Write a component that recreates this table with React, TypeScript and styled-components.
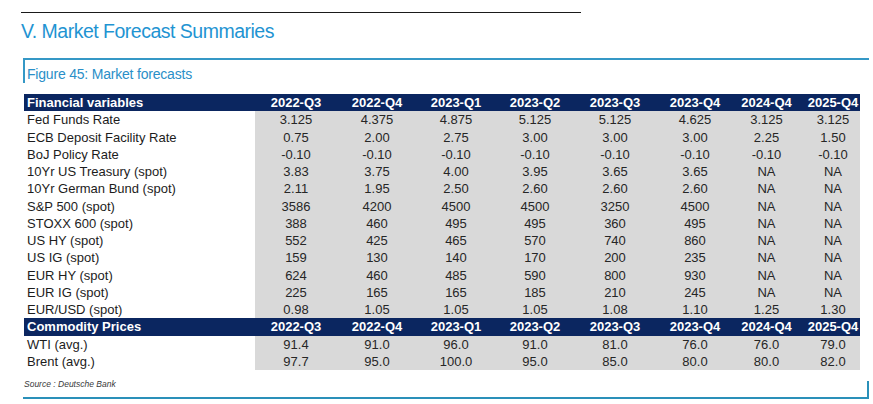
import { FC } from "react";
import styled, { createGlobalStyle } from "styled-components";

const GlobalStyle = createGlobalStyle`
	html, body {
		margin: 0;
		padding: 0;
		background: #ffffff;
	}
	body {
		font-family: "Liberation Sans", Arial, sans-serif;
	}
`;

const Page = styled.div`
	width: 873px;
	height: 404px;
	padding: 12px 0 0 21px;
	box-sizing: border-box;
	display: flex;
	flex-direction: column;
	overflow: hidden;
`;

const TopRule = styled.div`
	width: 560px;
	height: 1px;
	background-color: #1a1a1a;
`;

const SectionTitle = styled.h1`
	margin: 6px 0 0;
	font-size: 19.5px;
	font-weight: 400;
	line-height: 24px;
	color: #1f94d2;
	letter-spacing: -0.5px;
`;

const Figure = styled.div`
	margin: 15px 0 0 2px;
	width: 846px;
	display: flex;
	flex-direction: column;
`;

const FigureHead = styled.div`
	height: 25px;
	border-top: 2px solid #3598c6;
	border-left: 2px solid #3598c6;
	padding: 5px 0 0 2px;
	box-sizing: border-box;
`;

const FigureTitle = styled.span`
	font-size: 14px;
	line-height: 17px;
	letter-spacing: -0.2px;
	color: #2a8fc8;
`;

const Table = styled.table`
	margin: 11px 0 0 1px;
	width: 836px;
	border-collapse: collapse;
	table-layout: fixed;
	font-size: 13px;
`;

const HeadRow = styled.tr`
	height: 17.25px;
	background-color: #0b2660;
	color: #ffffff;
	font-weight: 700;
`;

const Row = styled.tr`
	height: 17.25px;
	color: #1c1c1c;
`;

const LabelCell = styled.td`
	padding: 0 0 0 3px;
	line-height: 15px;
	white-space: nowrap;
	text-align: left;
`;

const ValueCell = styled.td<{ $shift?: number; $head?: boolean }>`
	padding: 0 0 0 ${p => p.$shift ?? 0}px;
	line-height: 15px;
	white-space: nowrap;
	overflow: visible;
	text-align: center;
	background-color: ${p => (p.$head ? "transparent" : "#d9d9d9")};
	color: ${p => (p.$head ? "#ffffff" : "#262626")};
`;

const FigureFoot = styled.div`
	height: 23px;
	margin-top: 6px;
	border-bottom: 2px solid #2a90b9;
	border-right: 2px solid #2a90b9;
	box-sizing: border-box;
	position: relative;
`;

const FootRightCut = styled.div`
	position: absolute;
	right: -2px;
	top: 0;
	width: 2px;
	height: 5px;
	background: #ffffff;
`;

const SourceNote = styled.span`
	display: block;
	padding: 3px 0 0 1px;
	font-size: 8.5px;
	font-style: italic;
	color: #3a3a3a;
`;

const COL_WIDTHS = [231, 82, 80, 78, 80, 80, 80, 63, 62];
const SHIFTS = [0, 0, 0, 0, 0, 0, 0, 0, 8];

const PERIODS = [
	"2022-Q3",
	"2022-Q4",
	"2023-Q1",
	"2023-Q2",
	"2023-Q3",
	"2023-Q4",
	"2024-Q4",
	"2025-Q4",
];

const financial: [string, string[]][] = [
	["Fed Funds Rate", ["3.125", "4.375", "4.875", "5.125", "5.125", "4.625", "3.125", "3.125"]],
	["ECB Deposit Facility Rate", ["0.75", "2.00", "2.75", "3.00", "3.00", "3.00", "2.25", "1.50"]],
	["BoJ Policy Rate", ["-0.10", "-0.10", "-0.10", "-0.10", "-0.10", "-0.10", "-0.10", "-0.10"]],
	["10Yr US Treasury (spot)", ["3.83", "3.75", "4.00", "3.95", "3.65", "3.65", "NA", "NA"]],
	["10Yr German Bund (spot)", ["2.11", "1.95", "2.50", "2.60", "2.60", "2.60", "NA", "NA"]],
	["S&P 500 (spot)", ["3586", "4200", "4500", "4500", "3250", "4500", "NA", "NA"]],
	["STOXX 600 (spot)", ["388", "460", "495", "495", "360", "495", "NA", "NA"]],
	["US HY (spot)", ["552", "425", "465", "570", "740", "860", "NA", "NA"]],
	["US IG (spot)", ["159", "130", "140", "170", "200", "235", "NA", "NA"]],
	["EUR HY (spot)", ["624", "460", "485", "590", "800", "930", "NA", "NA"]],
	["EUR IG (spot)", ["225", "165", "165", "185", "210", "245", "NA", "NA"]],
	["EUR/USD (spot)", ["0.98", "1.05", "1.05", "1.05", "1.08", "1.10", "1.25", "1.30"]],
];

const commodities: [string, string[]][] = [
	["WTI (avg.)", ["91.4", "91.0", "96.0", "91.0", "81.0", "76.0", "76.0", "79.0"]],
	["Brent (avg.)", ["97.7", "95.0", "100.0", "95.0", "85.0", "80.0", "80.0", "82.0"]],
];

const Header: FC<{ title: string }> = ({ title }) => (
	<HeadRow>
		<LabelCell>{title}</LabelCell>
		{PERIODS.map((p, i) => (
			<ValueCell key={p} $head $shift={SHIFTS[i + 1]}>
				{p}
			</ValueCell>
		))}
	</HeadRow>
);

const Rows: FC<{ data: [string, string[]][] }> = ({ data }) => (
	<>
		{data.map(([label, values]) => (
			<Row key={label}>
				<LabelCell>{label}</LabelCell>
				{values.map((v, i) => (
					<ValueCell key={i} $shift={SHIFTS[i + 1]}>
						{v}
					</ValueCell>
				))}
			</Row>
		))}
	</>
);

const App: FC = () => {
	return (
		<>
			<GlobalStyle />
			<Page>
				<TopRule />
				<SectionTitle>V. Market Forecast Summaries</SectionTitle>
				<Figure>
					<FigureHead>
						<FigureTitle>Figure 45: Market forecasts</FigureTitle>
					</FigureHead>
					<Table>
						<colgroup>
							{COL_WIDTHS.map((w, i) => (
								<col key={i} style={{ width: w }} />
							))}
						</colgroup>
						<tbody>
							<Header title="Financial variables" />
							<Rows data={financial} />
							<Header title="Commodity Prices" />
							<Rows data={commodities} />
						</tbody>
					</Table>
					<FigureFoot>
						<FootRightCut />
						<SourceNote>Source : Deutsche Bank</SourceNote>
					</FigureFoot>
				</Figure>
			</Page>
		</>
	);
};

export default App;
